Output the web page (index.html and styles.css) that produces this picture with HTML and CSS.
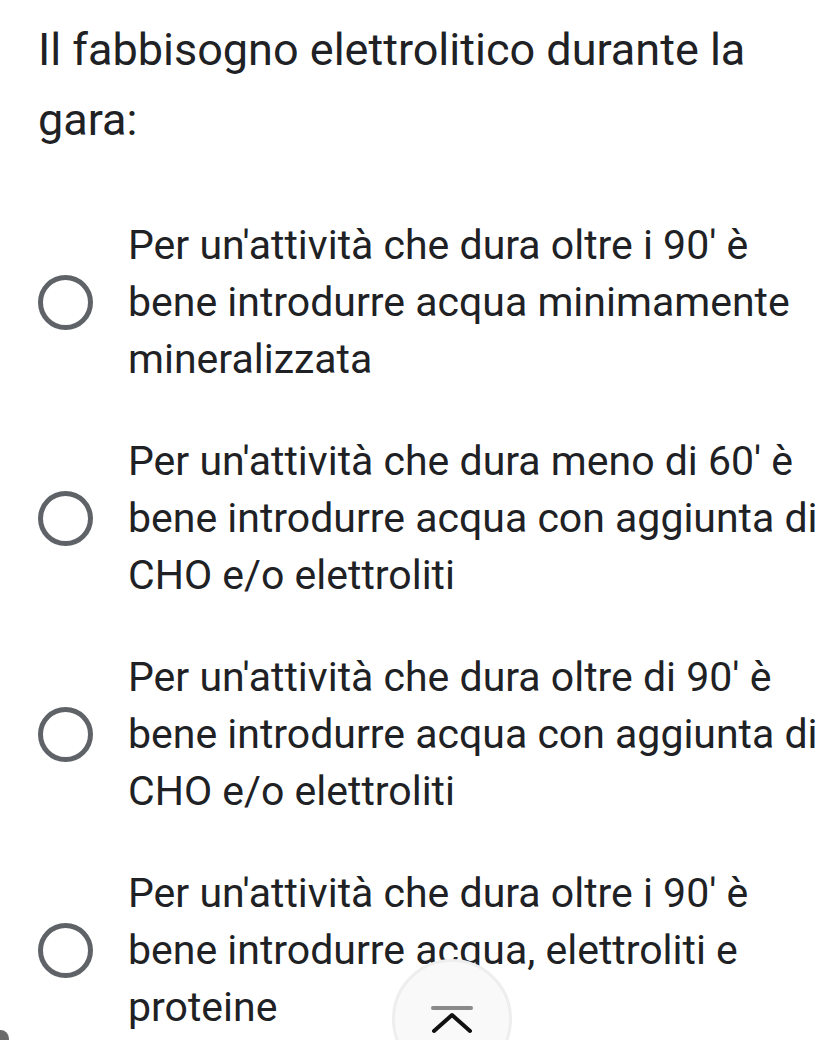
FILE: index.html
```html
<!DOCTYPE html>
<html lang="it">
<head>
  <meta charset="UTF-8">
  <meta name="viewport" content="width=device-width, initial-scale=1.0">
  <title>Quiz</title>
  <link rel="stylesheet" href="styles.css">
</head>
<body>
  <div class="page">
    <!-- Question -->
    <h1 class="question">Il fabbisogno elettrolitico durante la gara:</h1>

    <!-- Answers -->
    <div class="options">
      <label class="option">
        <span class="radio"></span>
        <span class="option-text">Per un'attività che dura oltre i 90' è bene introdurre acqua minimamente mineralizzata</span>
      </label>
      <label class="option">
        <span class="radio"></span>
        <span class="option-text">Per un'attività che dura meno di 60' è bene introdurre acqua con aggiunta di CHO e/o elettroliti</span>
      </label>
      <label class="option">
        <span class="radio"></span>
        <span class="option-text">Per un'attività che dura oltre di 90' è bene introdurre acqua con aggiunta di CHO e/o elettroliti</span>
      </label>
      <label class="option">
        <span class="radio"></span>
        <span class="option-text">Per un'attività che dura oltre i 90' è bene introdurre acqua, elettroliti e proteine</span>
      </label>
    </div>
  </div>

  <!-- Scroll to top -->
  <button class="to-top" type="button">
    <svg width="44" height="30" viewBox="0 0 44 30">
      <line x1="3" y1="2" x2="41" y2="2" stroke="#8a8a8a" stroke-width="4" stroke-linecap="round"/>
      <polyline points="4,25 22,9 40,25" fill="none" stroke="#111" stroke-width="4" stroke-linecap="round" stroke-linejoin="round"/>
    </svg>
  </button>

  <div class="edge-dot"></div>
</body>
</html>
```

FILE: styles.css
```css
body {
  margin: 0;
  padding: 0;
  background-color: #ffffff;
  font-family: Roboto, "Noto Sans", Arial, sans-serif;
  color: #202124;
  width: 840px;
  height: 1040px;
  overflow: hidden;
  position: relative;
}

.page {
  padding: 15px 0 0 38px;
}

.question {
  font-size: 45px;
  font-weight: 400;
  line-height: 70px;
  margin: 0;
  padding-right: 40px;
}

.options {
  margin-top: 62px;
  display: flex;
  flex-direction: column;
  gap: 45px;
}

.option {
  display: flex;
  align-items: center;
}

.radio {
  flex: none;
  width: 45px;
  height: 45px;
  border: 5px solid #5f6368;
  border-radius: 50%;
  margin-right: 35px;
}

.option-text {
  font-size: 41px;
  line-height: 57px;
  padding-right: 6px;
}

/* Floating scroll button */
.to-top {
  position: absolute;
  left: 392px;
  top: 959px;
  width: 120px;
  height: 120px;
  border-radius: 50%;
  border: 3px solid #eeeeee;
  background-color: #f9f9f9;
  display: flex;
  justify-content: center;
  padding-top: 44px;
  cursor: pointer;
}

.edge-dot {
  position: absolute;
  left: -8px;
  top: 1030px;
  width: 17px;
  height: 17px;
  border-radius: 50%;
  background-color: #6b6b6b;
}
```
